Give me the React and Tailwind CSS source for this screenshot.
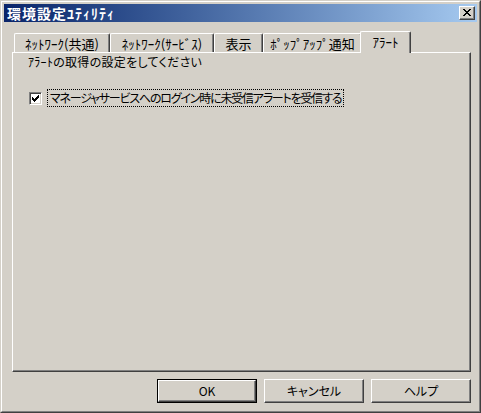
import React from "react";

function PixelGlyph({ rows, color = "#000", className = "" }) {
  const w = rows[0].length;
  const h = rows.length;
  const rects = [];
  rows.forEach((r, y) => {
    r.split("").forEach((c, x) => {
      if (c === "X") rects.push(<rect key={`${x}-${y}`} x={x} y={y} width="1" height="1" fill={color} />);
    });
  });
  return (
    <svg width={w} height={h} viewBox={`0 0 ${w} ${h}`} shapeRendering="crispEdges" className={className}>
      {rects}
    </svg>
  );
}

const closeX = [
  "XX....XX",
  ".XX..XX.",
  "..XXXX..",
  "...XX...",
  "..XXXX..",
  ".XX..XX.",
  "XX....XX",
];

const check = [
  "......X",
  ".....XX",
  "X...XXX",
  "XX.XXX.",
  "XXXXX..",
  ".XXX...",
  "..X....",
];

function Tab({ w, children }) {
  return (
    <div
      className={`${w} h-[19px] flex items-center justify-center border-t border-l border-r border-t-white border-l-white border-r-[#404040] shadow-[inset_-1px_0_#808080] rounded-tl-[2px] rounded-tr-[2px] text-[13px] leading-none whitespace-nowrap`}
    >
      {children}
    </div>
  );
}

function Button({ children, isDefault }) {
  return isDefault ? (
    <div className="w-[100px] h-[24px] border border-black flex">
      <div className="flex-1 flex items-center justify-center border-t border-l border-r border-b border-t-white border-l-white border-r-[#404040] border-b-[#404040] shadow-[inset_-1px_-1px_#808080] text-[12px] leading-none">
        {children}
      </div>
    </div>
  ) : (
    <div className="w-[100px] h-[24px] flex items-center justify-center border-t border-l border-r border-b border-t-white border-l-white border-r-[#404040] border-b-[#404040] shadow-[inset_-1px_-1px_#808080] text-[12px] leading-none">
      {children}
    </div>
  );
}

export default function App() {
  return (
    <div className="w-[481px] h-[413px] bg-[#d4d0c8] text-black font-['Noto_Sans_CJK_JP',sans-serif] [font-feature-settings:'palt'] border-t border-l border-r border-b border-t-[#d4d0c8] border-l-[#d4d0c8] border-r-[#404040] border-b-[#404040]">
      <div className="w-full h-full border-t border-l border-r border-b border-t-white border-l-white border-r-[#808080] border-b-[#808080] p-[2px] flex flex-col">
        {/* Title bar */}
        <div className="h-[18px] flex items-center justify-between pl-[3px] pr-[2px] bg-linear-to-r from-[#0a246a] to-[#a6caf0]">
          <span className="text-white font-bold text-[14px] leading-none tracking-[1px] whitespace-nowrap">環境設定ﾕﾃｨﾘﾃｨ</span>
          <div className="w-[16px] h-[14px] bg-[#d4d0c8] border-t border-l border-r border-b border-t-white border-l-white border-r-[#404040] border-b-[#404040] shadow-[inset_-1px_-1px_#808080] flex items-center justify-center">
            <PixelGlyph rows={closeX} className="-mt-[1px] -ml-[1px]" />
          </div>
        </div>

        <div className="h-[9px]" />

        {/* Tabs */}
        <div className="h-[21px] flex items-end pl-[10px] relative z-10">
          <Tab w="w-[96px]">ﾈｯﾄﾜｰｸ(共通)</Tab>
          <Tab w="w-[104px]">ﾈｯﾄﾜｰｸ(ｻｰﾋﾞｽ)</Tab>
          <Tab w="w-[49px]">表示</Tab>
          <Tab w="w-[99px]">ﾎﾟｯﾌﾟｱｯﾌﾟ通知</Tab>
          <div className="-ml-[2px] w-[51px] h-[22px] -mb-[1px] bg-[#d4d0c8] flex items-start justify-center pt-[3px] border-t border-l border-r border-t-white border-l-white border-r-[#404040] shadow-[inset_-1px_0_#808080] rounded-tl-[2px] rounded-tr-[2px] text-[13px] leading-[14px] whitespace-nowrap">
            ｱﾗｰﾄ
          </div>
        </div>

        {/* Panel */}
        <div className="h-[320px] ml-[8px] mr-[6px] border-t border-l border-r border-b border-t-white border-l-white border-r-[#404040] border-b-[#404040] shadow-[inset_-1px_-1px_#808080] pt-[2px] pl-[15px]">
          <div className="text-[12px] leading-[14px] tracking-[0.3px] whitespace-nowrap">ｱﾗｰﾄの取得の設定をしてください</div>
          <div className="mt-[20px] h-[18px] flex items-center">
            <div className="ml-[1px] w-[13px] h-[13px] bg-white border-t border-l border-r border-b border-t-[#808080] border-l-[#808080] border-r-white border-b-white shadow-[inset_1px_1px_#404040,inset_-1px_-1px_#d4d0c8] flex items-center justify-center">
              <PixelGlyph rows={check} />
            </div>
            <div className="ml-[5px] h-[18px] px-[2px] border border-dotted border-black flex items-center text-[12px] leading-none tracking-[-1.2px] whitespace-nowrap">
              マネージャサービスへのログイン時に未受信アラートを受信する
            </div>
          </div>
        </div>

        {/* Buttons */}
        <div className="mt-[7px] h-[24px] flex justify-end gap-[7px] pr-[6px]">
          <Button isDefault>OK</Button>
          <Button>キャンセル</Button>
          <Button>ヘルプ</Button>
        </div>
      </div>
    </div>
  );
}
